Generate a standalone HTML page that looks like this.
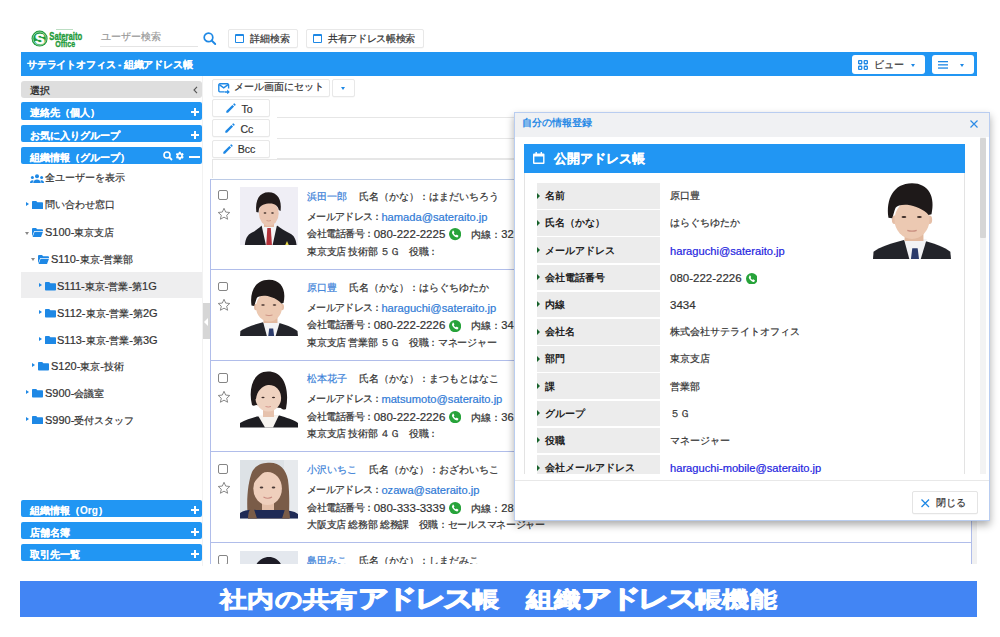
<!DOCTYPE html>
<html><head><meta charset="utf-8">
<style>
*{box-sizing:border-box;margin:0;padding:0}
html,body{width:1000px;height:637px;overflow:hidden;background:#fff}
body{position:relative;font-family:"Liberation Sans",sans-serif;font-size:10px;color:#333;-webkit-text-stroke:0.2px currentColor}
.a{position:absolute;white-space:nowrap}
.bar{position:absolute;left:21px;width:181px;height:17.6px;background:#2196f3;border-radius:2px;color:#fff;font-weight:bold}
.bar .t{position:absolute;left:9px;top:5px;line-height:12px;-webkit-text-stroke:0.1px #fff}
.plus{position:absolute;right:3.5px;top:6px;width:8px;height:8px}
.plus:before{content:"";position:absolute;left:0;top:3px;width:8px;height:2px;background:#fff}
.plus:after{content:"";position:absolute;left:3px;top:0;width:2px;height:8px;background:#fff}
.btn{position:absolute;background:#fff;border:1px solid #e8e8e8;border-radius:2px;box-shadow:0 0.5px 0.5px rgba(0,0,0,0.05)}
.tree{position:absolute;height:12px;line-height:12px;white-space:nowrap;color:#333}
.lab{position:absolute;left:537px;width:123px;height:25.6px;background:#ececec;font-weight:bold;color:#222}
.lab .tri{position:absolute;left:0;top:9.6px;width:0;height:0;border-left:3.6px solid #17612a;border-top:3.6px solid transparent;border-bottom:3.6px solid transparent}
.lab .t{position:absolute;left:8px;top:7.3px;line-height:12px;-webkit-text-stroke:0}
.val{position:absolute;left:670px;line-height:12px;white-space:nowrap;color:#333}
.lat{font-size:11.5px}
.l{font-size:11px}
.lat11{font-size:11.15px}
.ln{line-height:12px;color:#333;font-size:9.7px}
.nm{color:#3a7fd8}
.lk{color:#2f7ad6}
.cb{width:9.7px;height:9.7px;border:1.2px solid #858585;border-radius:2px}
.ln.lat11,.ln .lat11{font-size:11.15px}
.ln .lat115{font-size:11.5px}
.mlk{color:#2424e0;font-size:11.15px}
.mlat{font-size:11.5px}
.kk{font-size:31px;letter-spacing:-3px;-webkit-text-stroke:1.5px #fff}
.ph{display:inline-block;vertical-align:-2.5px;margin-left:3.8px}
</style></head><body>

<!-- logo -->
<svg class="a" style="left:30px;top:27px" width="56" height="22" viewBox="0 0 56 22">
  <circle cx="9.6" cy="11.6" r="8" fill="#1f9b3b"/>
  <circle cx="9.6" cy="11.6" r="6.6" fill="none" stroke="#fff" stroke-width="0.6" opacity="0.8"/>
  <text x="9.8" y="16.6" text-anchor="middle" font-family="Liberation Sans" font-weight="bold" font-size="14.5" fill="#fff" stroke="#fff" stroke-width="0.6">S</text>
  <text x="19.3" y="13.2" font-family="Liberation Sans" font-weight="bold" font-size="10" fill="#1f9b3b" stroke="#1f9b3b" stroke-width="0.35" textLength="33" lengthAdjust="spacingAndGlyphs">Sateraito</text>
  <text x="25.2" y="20.4" font-family="Liberation Sans" font-weight="bold" font-size="9.5" fill="#1f9b3b" stroke="#1f9b3b" stroke-width="0.35" textLength="20" lengthAdjust="spacingAndGlyphs">Office</text>
  <rect x="26" y="2.2" width="17" height="0.7" fill="#9fd0a9"/>
</svg>
<!-- user search -->
<div class="a" style="left:101px;top:31px;line-height:12px;color:#999">ユーザー検索</div>
<div class="a" style="left:100px;top:46px;width:98px;height:1px;background:#e4e4e4"></div>
<svg class="a" style="left:202px;top:31px" width="16" height="15" viewBox="0 0 16 15"><circle cx="6.5" cy="6.4" r="4.3" fill="none" stroke="#1e88e5" stroke-width="1.7"/><line x1="9.6" y1="9.5" x2="13.2" y2="13" stroke="#1e88e5" stroke-width="1.9" stroke-linecap="round"/></svg>

<div class="btn" style="left:228px;top:29px;width:70px;height:19px">
  <div class="a" style="left:6px;top:4px;width:9px;height:9px;border:1.6px solid #1e88e5;border-top-width:2.6px;border-radius:1px"></div>
  <div class="a" style="left:21px;top:3px;line-height:12px;color:#333">詳細検索</div>
</div>
<div class="btn" style="left:306px;top:29px;width:118px;height:19px">
  <div class="a" style="left:6px;top:4px;width:9px;height:9px;border:1.6px solid #1e88e5;border-top-width:2.6px;border-radius:1px"></div>
  <div class="a" style="left:21px;top:3px;line-height:12px;color:#333;letter-spacing:-0.35px">共有アドレス帳検索</div>
</div>

<!-- header bar -->
<div class="a" style="left:21px;top:52px;width:956px;height:24px;background:#2196f3"></div>
<div class="a" style="left:27px;top:58.5px;line-height:12px;color:#fff;font-weight:bold;-webkit-text-stroke:0.1px #fff;letter-spacing:-0.18px">サテライトオフィス - 組織アドレス帳</div>
<div class="a" style="left:852px;top:55px;width:73px;height:19px;background:#fff;border-radius:3px">
  <svg class="a" style="left:6px;top:5px" width="10" height="10" viewBox="0 0 10 10"><g fill="none" stroke="#1e88e5" stroke-width="1.3"><rect x="0.65" y="0.65" width="3.1" height="3.1" rx="0.5"/><rect x="6.25" y="0.65" width="3.1" height="3.1" rx="0.5"/><rect x="0.65" y="6.25" width="3.1" height="3.1" rx="0.5"/><rect x="6.25" y="6.25" width="3.1" height="3.1" rx="0.5"/></g></svg>
  <div class="a" style="left:21.5px;top:3.5px;line-height:12px;color:#333">ビュー</div>
  <div class="a" style="left:59px;top:8.5px;border-top:3px solid #1e88e5;border-left:2.5px solid transparent;border-right:2.5px solid transparent"></div>
</div>
<div class="a" style="left:931.5px;top:55px;width:42.5px;height:19px;background:#fff;border-radius:3px">
  <svg class="a" style="left:6.5px;top:6px" width="10" height="8" viewBox="0 0 10 8"><g fill="#1e88e5"><rect x="0" y="0" width="10" height="1.3"/><rect x="0" y="3.2" width="10" height="1.3"/><rect x="0" y="6.4" width="10" height="1.3"/></g></svg>
  <div class="a" style="left:28.5px;top:8.5px;border-top:3px solid #1e88e5;border-left:2.5px solid transparent;border-right:2.5px solid transparent"></div>
</div>

<!-- LEFT PANEL -->
<div class="a" style="left:21px;top:81px;width:181px;height:16.6px;background:#dedede;border-radius:3px">
  <div class="a" style="left:9px;top:3.5px;line-height:12px;color:#333;font-weight:bold;-webkit-text-stroke:0">選択</div>
  <svg class="a" style="left:172px;top:5px" width="5" height="8" viewBox="0 0 5 8"><path d="M4 .8L1 4l3 3.2" fill="none" stroke="#555" stroke-width="1.1"/></svg>
</div>
<div class="bar" style="top:102.4px"><span class="t">連絡先（個人）</span><span class="plus"></span></div>
<div class="bar" style="top:124.6px"><span class="t">お気に入りグループ</span><span class="plus"></span></div>
<div class="bar" style="top:146.6px"><span class="t">組織情報（グループ）</span>
  <svg class="a" style="left:142px;top:4.5px" width="10" height="10" viewBox="0 0 10 10"><circle cx="4" cy="4" r="3" fill="none" stroke="#fff" stroke-width="1.6"/><line x1="6.2" y1="6.2" x2="9" y2="9" stroke="#fff" stroke-width="1.8"/></svg>
  <svg class="a" style="left:153.6px;top:4.1px" width="9.6" height="9.6" viewBox="0 0 24 24"><path fill="#fff" d="M19.4 13c.04-.3.06-.65.06-1s-.02-.7-.07-1l2.1-1.65a.5.5 0 0 0 .12-.64l-2-3.46a.5.5 0 0 0-.6-.22l-2.5 1a7.3 7.3 0 0 0-1.7-1l-.38-2.65A.5.5 0 0 0 14 2h-4a.5.5 0 0 0-.5.42l-.37 2.65c-.6.25-1.17.6-1.7 1l-2.5-1a.5.5 0 0 0-.6.22l-2 3.46a.5.5 0 0 0 .12.64L4.57 11c-.04.3-.07.65-.07 1s.02.7.07 1l-2.1 1.65a.5.5 0 0 0-.12.64l2 3.46c.12.22.38.3.6.22l2.5-1c.52.4 1.08.74 1.7 1l.37 2.65c.04.24.25.42.5.42h4c.25 0 .46-.18.5-.42l.37-2.65c.6-.26 1.17-.6 1.7-1l2.5 1c.22.08.48 0 .6-.22l2-3.46a.5.5 0 0 0-.12-.64zM12 15.5A3.5 3.5 0 1 1 12 8.5a3.5 3.5 0 0 1 0 7z"/></svg>
  <div class="a" style="left:168px;top:9.2px;width:11px;height:2.2px;background:#fff"></div>
</div>

<svg class="a" style="left:30px;top:174px" width="14" height="9" viewBox="0 0 14 9"><g fill="#1e88e5"><circle cx="7" cy="2.3" r="2"/><path d="M3.2 9c0-2.2 1.7-3.6 3.8-3.6S10.8 6.8 10.8 9z"/><circle cx="2.4" cy="3.6" r="1.5"/><path d="M0 9c0-1.7 1-2.7 2.4-2.7.6 0 1 .2 1.3.4C3 7.4 2.6 8.1 2.6 9z"/><circle cx="11.6" cy="3.6" r="1.5"/><path d="M14 9c0-1.7-1-2.7-2.4-2.7-.6 0-1 .2-1.3.4.7.7 1.1 1.4 1.1 2.3z"/></g></svg>
<div class="tree" style="left:45px;top:172.3px">全ユーザーを表示</div>

<!-- tree rows inserted here -->
<div class="a" style="left:21px;top:272px;width:181px;height:26px;background:#eeeeef"></div>
<div class="a" style="left:25.9px;top:202.0px;border-left:3px solid #1e88e5;border-top:2.5px solid transparent;border-bottom:2.5px solid transparent"></div>
<svg class="a" style="left:32.0px;top:200.9px" width="11" height="8.6" viewBox="0 0 11 8.6"><path fill="#1e88e5" d="M0 .8A.8.8 0 0 1 .8 0h3.4l1.2 1.3h4.8a.8.8 0 0 1 .8.8v5.7a.8.8 0 0 1-.8.8H.8A.8.8 0 0 1 0 7.8z"/></svg>
<div class="tree" style="left:45px;top:198.8px">問い合わせ窓口</div>
<div class="a" style="left:24.6px;top:231.5px;border-top:3px solid #888;border-left:2.5px solid transparent;border-right:2.5px solid transparent"></div>
<svg class="a" style="left:32.0px;top:228.2px" width="11" height="9" viewBox="0 0 11 9"><path fill="#1e88e5" d="M0 1a1 1 0 0 1 1-1h3l1.2 1.2H10a1 1 0 0 1 1 1V3H2.3L0 8.5z"/><path fill="#1e88e5" d="M2.6 3.8H11L9 9H0.6z"/></svg>
<div class="tree" style="left:45px;top:226.3px"><span class=l>S100-</span>東京支店</div>
<div class="a" style="left:31px;top:258.1px;border-top:3px solid #888;border-left:2.5px solid transparent;border-right:2.5px solid transparent"></div>
<svg class="a" style="left:38.1px;top:254.8px" width="11" height="9" viewBox="0 0 11 9"><path fill="#1e88e5" d="M0 1a1 1 0 0 1 1-1h3l1.2 1.2H10a1 1 0 0 1 1 1V3H2.3L0 8.5z"/><path fill="#1e88e5" d="M2.6 3.8H11L9 9H0.6z"/></svg>
<div class="tree" style="left:51px;top:252.9px"><span class=l>S110-</span>東京<span class=l>-</span>営業部</div>
<div class="a" style="left:38.5px;top:283.1px;border-left:3px solid #1e88e5;border-top:2.5px solid transparent;border-bottom:2.5px solid transparent"></div>
<svg class="a" style="left:44.5px;top:282.0px" width="11" height="8.6" viewBox="0 0 11 8.6"><path fill="#1e88e5" d="M0 .8A.8.8 0 0 1 .8 0h3.4l1.2 1.3h4.8a.8.8 0 0 1 .8.8v5.7a.8.8 0 0 1-.8.8H.8A.8.8 0 0 1 0 7.8z"/></svg>
<div class="tree" style="left:57px;top:279.9px"><span class=l>S111-</span>東京<span class=l>-</span>営業<span class=l>-</span>第<span class=l>1G</span></div>
<div class="a" style="left:38.5px;top:310.1px;border-left:3px solid #1e88e5;border-top:2.5px solid transparent;border-bottom:2.5px solid transparent"></div>
<svg class="a" style="left:44.5px;top:309.0px" width="11" height="8.6" viewBox="0 0 11 8.6"><path fill="#1e88e5" d="M0 .8A.8.8 0 0 1 .8 0h3.4l1.2 1.3h4.8a.8.8 0 0 1 .8.8v5.7a.8.8 0 0 1-.8.8H.8A.8.8 0 0 1 0 7.8z"/></svg>
<div class="tree" style="left:57px;top:306.9px"><span class=l>S112-</span>東京<span class=l>-</span>営業<span class=l>-</span>第<span class=l>2G</span></div>
<div class="a" style="left:38.5px;top:336.7px;border-left:3px solid #1e88e5;border-top:2.5px solid transparent;border-bottom:2.5px solid transparent"></div>
<svg class="a" style="left:44.5px;top:335.6px" width="11" height="8.6" viewBox="0 0 11 8.6"><path fill="#1e88e5" d="M0 .8A.8.8 0 0 1 .8 0h3.4l1.2 1.3h4.8a.8.8 0 0 1 .8.8v5.7a.8.8 0 0 1-.8.8H.8A.8.8 0 0 1 0 7.8z"/></svg>
<div class="tree" style="left:57px;top:333.5px"><span class=l>S113-</span>東京<span class=l>-</span>営業<span class=l>-</span>第<span class=l>3G</span></div>
<div class="a" style="left:32.3px;top:363.2px;border-left:3px solid #1e88e5;border-top:2.5px solid transparent;border-bottom:2.5px solid transparent"></div>
<svg class="a" style="left:38.1px;top:362.1px" width="11" height="8.6" viewBox="0 0 11 8.6"><path fill="#1e88e5" d="M0 .8A.8.8 0 0 1 .8 0h3.4l1.2 1.3h4.8a.8.8 0 0 1 .8.8v5.7a.8.8 0 0 1-.8.8H.8A.8.8 0 0 1 0 7.8z"/></svg>
<div class="tree" style="left:51px;top:360.0px"><span class=l>S120-</span>東京<span class=l>-</span>技術</div>
<div class="a" style="left:26.0px;top:390.4px;border-left:3px solid #1e88e5;border-top:2.5px solid transparent;border-bottom:2.5px solid transparent"></div>
<svg class="a" style="left:32.0px;top:389.3px" width="11" height="8.6" viewBox="0 0 11 8.6"><path fill="#1e88e5" d="M0 .8A.8.8 0 0 1 .8 0h3.4l1.2 1.3h4.8a.8.8 0 0 1 .8.8v5.7a.8.8 0 0 1-.8.8H.8A.8.8 0 0 1 0 7.8z"/></svg>
<div class="tree" style="left:45px;top:387.2px"><span class=l>S900-</span>会議室</div>
<div class="a" style="left:26.0px;top:416.9px;border-left:3px solid #1e88e5;border-top:2.5px solid transparent;border-bottom:2.5px solid transparent"></div>
<svg class="a" style="left:32.0px;top:415.8px" width="11" height="8.6" viewBox="0 0 11 8.6"><path fill="#1e88e5" d="M0 .8A.8.8 0 0 1 .8 0h3.4l1.2 1.3h4.8a.8.8 0 0 1 .8.8v5.7a.8.8 0 0 1-.8.8H.8A.8.8 0 0 1 0 7.8z"/></svg>
<div class="tree" style="left:45px;top:413.7px"><span class=l>S990-</span>受付スタッフ</div>

<div class="bar" style="top:499.7px"><span class="t">組織情報（Org）</span><span class="plus"></span></div>
<div class="bar" style="top:521.9px"><span class="t">店舗名簿</span><span class="plus"></span></div>
<div class="bar" style="top:543.5px"><span class="t">取引先一覧</span><span class="plus"></span></div>

<!-- MAIN -->
<div class="btn" style="left:212px;top:78.5px;width:118px;height:18px">
  <svg class="a" style="left:5px;top:3.5px" width="12.5" height="11" viewBox="0 0 12.5 11"><g fill="none" stroke="#1e88e5" stroke-width="1.4"><path d="M6.6 8.9H1.9a1.1 1.1 0 0 1-1.1-1.1V1.9A1.1 1.1 0 0 1 1.9.8h7.6a1.1 1.1 0 0 1 1.1 1.1V5.6"/><path d="M1.3 1.6L5.7 4.9 10.1 1.6"/></g><path fill="#1e88e5" d="M6.8 8.2h2.4V6.6l2.6 2.4-2.6 2.4V9.8H6.8z"/></svg>
  <div class="a" style="left:20.8px;top:1.8px;line-height:12px;color:#333">メール画面にセット</div>
</div>
<div class="btn" style="left:331.5px;top:78.5px;width:23.5px;height:18px">
  <div class="a" style="left:8.5px;top:7px;border-top:3px solid #1e88e5;border-left:2.5px solid transparent;border-right:2.5px solid transparent"></div>
</div>
<div class="btn" style="left:211.7px;top:98.8px;width:58px;height:18px"><svg class="a" style="left:13.6px;top:3px" width="10" height="10" viewBox="0 0 10 10"><path fill="#1e88e5" d="M.3 9.7V8L6.4 1.9 8.1 3.6 2 9.7zM7.1 1.2L7.9.4a.5.5 0 0 1 .7 0l1 1a.5.5 0 0 1 0 .7L8.8 2.9z"/></svg><div class="a" style="left:28.9px;top:2.8px;line-height:12px;font-size:10.6px;color:#333">To</div></div>
<div class="btn" style="left:211.7px;top:119.3px;width:58px;height:18px"><svg class="a" style="left:12.6px;top:3px" width="10" height="10" viewBox="0 0 10 10"><path fill="#1e88e5" d="M.3 9.7V8L6.4 1.9 8.1 3.6 2 9.7zM7.1 1.2L7.9.4a.5.5 0 0 1 .7 0l1 1a.5.5 0 0 1 0 .7L8.8 2.9z"/></svg><div class="a" style="left:27.7px;top:2.8px;line-height:12px;font-size:10.6px;color:#333">Cc</div></div>
<div class="btn" style="left:211.7px;top:139.6px;width:58px;height:18px"><svg class="a" style="left:10.1px;top:3px" width="10" height="10" viewBox="0 0 10 10"><path fill="#1e88e5" d="M.3 9.7V8L6.4 1.9 8.1 3.6 2 9.7zM7.1 1.2L7.9.4a.5.5 0 0 1 .7 0l1 1a.5.5 0 0 1 0 .7L8.8 2.9z"/></svg><div class="a" style="left:25.0px;top:2.8px;line-height:12px;font-size:10.6px;color:#333">Bcc</div></div>
<div class="a" style="left:277px;top:117px;width:700px;height:1px;background:#e6e6e6"></div>
<div class="a" style="left:277px;top:138px;width:700px;height:1px;background:#e6e6e6"></div>
<div class="a" style="left:277px;top:158px;width:700px;height:1px;background:#e6e6e6"></div>
<div class="a" style="left:212px;top:158.5px;width:765px;height:19px;border:1px solid #e6e6e6;border-right:none;border-bottom:none"></div>
<!--LIST_START-->
<div class="a" style="left:210px;top:179px;width:762px;height:385px;overflow:hidden">
<div class="a" style="left:0;top:0;width:762px;height:1px;background:#bccbe6"></div>
<div class="a" style="left:0;top:0;width:1px;height:385px;background:#b0bdea"></div>
<div class="a" style="left:761px;top:0;width:1px;height:385px;background:#b0bdea"></div>
<div class="a cb" style="left:8.3px;top:11.10px"></div>
<svg class="a" style="left:6.5px;top:28.20px" width="14" height="14" viewBox="0 0 24 24"><path fill="none" stroke="#808080" stroke-width="1.6" stroke-linejoin="round" d="M12 2.2l2.9 6.5 7 .7-5.3 4.7 1.6 6.9L12 17.4 5.8 21l1.6-6.9L2.1 9.4l7-.7z"/></svg>
<div class="a" style="left:30.2px;top:7.70px;width:58px;height:58.5px"><svg width="100%" height="100%" viewBox="0 0 58 58.5" preserveAspectRatio="none" style="display:block">
<rect width="58" height="58.5" fill="#efeef5"/>
<path fill="#1f1f25" d="M4.8 58.5 C5.5 52 7 48 12 45.5 C16 43.5 19 41 21.4 38.8 L37.5 38.8 C40 41 45 44 50 46.5 C54 48.5 56 52 56.6 58.5Z"/>
<path fill="#f4f4f6" d="M21.5 38 L37 38 L32.5 58.5 L26 58.5Z"/>
<path fill="#b3323a" d="M27.3 41 L30.8 41 L32 58.5 L26.2 58.5Z"/>
<rect x="24" y="32" width="10" height="8" fill="#e3b9a2"/>
<ellipse cx="28.8" cy="26.5" rx="9.9" ry="12.3" fill="#eac6b2"/>
<path fill="#211a1a" d="M16.3 25 C15 13 19.5 5.3 28.5 5.3 C37.5 5.3 42 12.5 40.6 24 L38.8 23 C38 19 35 16.5 30 16.5 C25 16.5 20.5 18 19 22 L18.5 25.5Z"/>
<path fill="#e7d84a" d="M45 58.5 L47 54 L49 58.5Z"/>
<g fill="#3a2a26"><ellipse cx="25" cy="26" rx="1.4" ry="0.7"/><ellipse cx="32.5" cy="26" rx="1.4" ry="0.7"/></g><path d="M26.5 33.5 Q28.8 34.5 31 33.5" stroke="#c98f80" stroke-width="0.8" fill="none"/>
</svg></div>
<div class="a ln" style="left:97.2px;top:11.50px"><span class="nm">浜田一郎</span><span style="margin-left:12px">氏名（かな）：はまだいちろう</span></div>
<div class="a ln" style="left:97.2px;top:31.60px;letter-spacing:-0.7px">メールアドレス：</div><div class="a ln lk lat11" style="left:171.4px;top:31.60px">hamada@sateraito.jp</div>
<div class="a ln" style="left:97.2px;top:49.10px;letter-spacing:-0.5px">会社電話番号：</div><div class="a ln" style="left:163.7px;top:49.10px"><span class="lat115">080-222-2225</span><svg class="ph" width="12.2" height="12.2" viewBox="0 0 12 12"><circle cx="6" cy="6" r="6" fill="#27a33a"/><path fill="#fff" d="M3.6 2.6c.3-.2.6-.2.8.1l.8 1.2c.2.3.1.6-.1.8l-.4.4c.3.8 1 1.6 1.9 2.1l.4-.4c.2-.2.5-.3.8-.1l1.2.8c.3.2.3.5.1.8l-.6.7c-.3.3-.8.4-1.2.2C5.4 8.4 3.8 6.9 3 5.1c-.2-.4-.1-.9.2-1.2z"/></svg><span style="margin-left:10px">内線：<span class="lat11">3232</span></span></div>
<div class="a ln" style="left:97.2px;top:66.70px;letter-spacing:-0.3px">東京支店 技術部 ５Ｇ　役職：</div>
<div class="a" style="left:0;top:89.60px;width:762px;height:1px;background:#b0bdea"></div>
<div class="a cb" style="left:8.3px;top:102.70px"></div>
<svg class="a" style="left:6.5px;top:119.30px" width="14" height="14" viewBox="0 0 24 24"><path fill="none" stroke="#808080" stroke-width="1.6" stroke-linejoin="round" d="M12 2.2l2.9 6.5 7 .7-5.3 4.7 1.6 6.9L12 17.4 5.8 21l1.6-6.9L2.1 9.4l7-.7z"/></svg>
<div class="a" style="left:30.2px;top:98.80px;width:58px;height:58.5px"><svg width="100%" height="100%" viewBox="0 0 58 58.5" preserveAspectRatio="none" style="display:block">
<rect width="58" height="58.5" fill="#ffffff"/>
<path fill="#23242a" d="M0 58.5 L0.4 53 C5 49.5 14 46.5 23 44.3 L36 44.3 C45 46.5 53 49.5 57.5 53 L58 58.5Z"/>
<path fill="#f3f3f5" d="M23 43.5 L40 43.5 L35.5 58.5 L27 58.5Z"/>
<path fill="#2b3b6b" d="M29.2 50.5 L33.2 50.5 L34.2 58.5 L28.2 58.5Z"/>
<rect x="23.5" y="36" width="14" height="9" fill="#e2b99f"/>
<ellipse cx="16" cy="29" rx="2" ry="3.2" fill="#e5bea6"/>
<ellipse cx="42" cy="29" rx="2" ry="3.2" fill="#e5bea6"/>
<ellipse cx="29" cy="29" rx="13" ry="14.5" fill="#ecc9b2"/>
<path fill="#1e1919" d="M11.5 27.5 C9.5 14 15 1.7 29 1.7 C41.5 1.7 46.5 12 43.5 25 L41.3 25.5 C38.5 21.5 31 18.5 25.5 17.8 C21 17.5 18 18.5 16.8 20 C15.8 22.5 15.2 25.5 14.2 28Z"/>
<g fill="#3a2a26"><ellipse cx="23" cy="27" rx="1.8" ry="0.8"/><ellipse cx="34.5" cy="27" rx="1.8" ry="0.8"/></g><path d="M25.5 37 Q29 38.3 32.5 37" stroke="#c98f80" stroke-width="0.9" fill="none"/>
</svg></div>
<div class="a ln" style="left:97.2px;top:102.60px"><span class="nm">原口豊</span><span style="margin-left:12px">氏名（かな）：はらぐちゆたか</span></div>
<div class="a ln" style="left:97.2px;top:122.70px;letter-spacing:-0.7px">メールアドレス：</div><div class="a ln lk lat11" style="left:171.4px;top:122.70px">haraguchi@sateraito.jp</div>
<div class="a ln" style="left:97.2px;top:140.20px;letter-spacing:-0.5px">会社電話番号：</div><div class="a ln" style="left:163.7px;top:140.20px"><span class="lat115">080-222-2226</span><svg class="ph" width="12.2" height="12.2" viewBox="0 0 12 12"><circle cx="6" cy="6" r="6" fill="#27a33a"/><path fill="#fff" d="M3.6 2.6c.3-.2.6-.2.8.1l.8 1.2c.2.3.1.6-.1.8l-.4.4c.3.8 1 1.6 1.9 2.1l.4-.4c.2-.2.5-.3.8-.1l1.2.8c.3.2.3.5.1.8l-.6.7c-.3.3-.8.4-1.2.2C5.4 8.4 3.8 6.9 3 5.1c-.2-.4-.1-.9.2-1.2z"/></svg><span style="margin-left:10px">内線：<span class="lat11">3434</span></span></div>
<div class="a ln" style="left:97.2px;top:157.80px;letter-spacing:-0.3px">東京支店 営業部 ５Ｇ　役職：マネージャー</div>
<div class="a" style="left:0;top:180.95px;width:762px;height:1px;background:#b0bdea"></div>
<div class="a cb" style="left:8.3px;top:194.05px"></div>
<svg class="a" style="left:6.5px;top:210.65px" width="14" height="14" viewBox="0 0 24 24"><path fill="none" stroke="#808080" stroke-width="1.6" stroke-linejoin="round" d="M12 2.2l2.9 6.5 7 .7-5.3 4.7 1.6 6.9L12 17.4 5.8 21l1.6-6.9L2.1 9.4l7-.7z"/></svg>
<div class="a" style="left:30.2px;top:190.15px;width:58px;height:58.5px"><svg width="100%" height="100%" viewBox="0 0 58 58.5" preserveAspectRatio="none" style="display:block">
<rect width="58" height="58.5" fill="#fff"/>
<path fill="#1d1d22" d="M0 58.5 L0 54 C5 51 12 49 16.7 47.6 L39.5 46.6 C46 48.5 54 51 58 54 L58 58.5Z"/>
<path fill="#f7f4f0" d="M18 46.5 L39 46 L33 58.5 L25 58.5Z"/>
<rect x="23" y="38" width="11" height="10" fill="#e6c2ad"/>
<path fill="#201a1b" d="M12 36 C8 20 13 2.6 28 2.6 C43 2.6 50 18 46 40 C44 41 42 40.5 41 39 L16 36 C14 37 13 37 12 36Z"/>
<ellipse cx="28.3" cy="29" rx="12.8" ry="13.5" fill="#efd2c0"/>
<path fill="#201a1b" d="M14.5 30 C14 16 22 9 33 9.5 C40 10 44 16 43.5 24 C40 19 34 15.5 28 16 C22 17 17 22 16 30Z"/>
<g fill="#3a2a26"><ellipse cx="23" cy="28.5" rx="1.6" ry="0.8"/><ellipse cx="33.5" cy="28.5" rx="1.6" ry="0.8"/></g><path d="M25.5 37.5 Q28.3 38.6 31 37.5" stroke="#d08f86" stroke-width="0.9" fill="none"/>
</svg></div>
<div class="a ln" style="left:97.2px;top:193.95px"><span class="nm">松本花子</span><span style="margin-left:12px">氏名（かな）：まつもとはなこ</span></div>
<div class="a ln" style="left:97.2px;top:214.05px;letter-spacing:-0.7px">メールアドレス：</div><div class="a ln lk lat11" style="left:171.4px;top:214.05px">matsumoto@sateraito.jp</div>
<div class="a ln" style="left:97.2px;top:231.55px;letter-spacing:-0.5px">会社電話番号：</div><div class="a ln" style="left:163.7px;top:231.55px"><span class="lat115">080-222-2226</span><svg class="ph" width="12.2" height="12.2" viewBox="0 0 12 12"><circle cx="6" cy="6" r="6" fill="#27a33a"/><path fill="#fff" d="M3.6 2.6c.3-.2.6-.2.8.1l.8 1.2c.2.3.1.6-.1.8l-.4.4c.3.8 1 1.6 1.9 2.1l.4-.4c.2-.2.5-.3.8-.1l1.2.8c.3.2.3.5.1.8l-.6.7c-.3.3-.8.4-1.2.2C5.4 8.4 3.8 6.9 3 5.1c-.2-.4-.1-.9.2-1.2z"/></svg><span style="margin-left:10px">内線：<span class="lat11">3636</span></span></div>
<div class="a ln" style="left:97.2px;top:249.15px;letter-spacing:-0.3px">東京支店 技術部 ４Ｇ　役職：</div>
<div class="a" style="left:0;top:271.95px;width:762px;height:1px;background:#b0bdea"></div>
<div class="a cb" style="left:8.3px;top:285.05px"></div>
<svg class="a" style="left:6.5px;top:301.65px" width="14" height="14" viewBox="0 0 24 24"><path fill="none" stroke="#808080" stroke-width="1.6" stroke-linejoin="round" d="M12 2.2l2.9 6.5 7 .7-5.3 4.7 1.6 6.9L12 17.4 5.8 21l1.6-6.9L2.1 9.4l7-.7z"/></svg>
<div class="a" style="left:30.2px;top:281.15px;width:58px;height:58.5px"><svg width="100%" height="100%" viewBox="0 0 58 58.5" preserveAspectRatio="none" style="display:block">
<rect width="58" height="58.5" fill="#dde2e6"/>
<rect x="44" y="0" width="14" height="58.5" fill="#e7eaed"/>
<path fill="#7a5c48" d="M8 58.5 C6 40 8 22 12 12 C16 4 24 2.8 30 2.8 C40 2.8 46 10 48 20 C50 35 49 50 49 58.5Z"/>
<path fill="#1f2a55" d="M0 58.5 L0 53 C4 50 10 49.5 16 50 L42 50 C48 50 54 51 58 54 L58 58.5Z"/>
<path fill="#7a5c48" d="M8 58.5 C8 52 10 48 13 46 L17 58.5Z M42 58.5 L46 46 C49 49 50 54 50 58.5Z"/>
<rect x="22" y="38" width="12" height="12" fill="#e4bfa8"/>
<ellipse cx="27.6" cy="28.5" rx="14.3" ry="16.6" fill="#efcfbc"/>
<path fill="#7a5c48" d="M13 24 C13 12 22 7 30 7.5 C25 11 19 16 13 24Z M30 7.5 C38 8 43 14 43 24 C40 17 35 11 30 7.5Z"/>
<g fill="#4a3a36"><ellipse cx="21.5" cy="27.5" rx="1.8" ry="0.9"/><ellipse cx="33.5" cy="27.5" rx="1.8" ry="0.9"/></g><path d="M23.5 37 Q28 39.5 32 37" stroke="#c98a80" stroke-width="1.1" fill="none"/>
</svg></div>
<div class="a ln" style="left:97.2px;top:284.95px"><span class="nm">小沢いちこ</span><span style="margin-left:12px">氏名（かな）：おざわいちこ</span></div>
<div class="a ln" style="left:97.2px;top:305.05px;letter-spacing:-0.7px">メールアドレス：</div><div class="a ln lk lat11" style="left:171.4px;top:305.05px">ozawa@sateraito.jp</div>
<div class="a ln" style="left:97.2px;top:322.55px;letter-spacing:-0.5px">会社電話番号：</div><div class="a ln" style="left:163.7px;top:322.55px"><span class="lat115">080-333-3339</span><svg class="ph" width="12.2" height="12.2" viewBox="0 0 12 12"><circle cx="6" cy="6" r="6" fill="#27a33a"/><path fill="#fff" d="M3.6 2.6c.3-.2.6-.2.8.1l.8 1.2c.2.3.1.6-.1.8l-.4.4c.3.8 1 1.6 1.9 2.1l.4-.4c.2-.2.5-.3.8-.1l1.2.8c.3.2.3.5.1.8l-.6.7c-.3.3-.8.4-1.2.2C5.4 8.4 3.8 6.9 3 5.1c-.2-.4-.1-.9.2-1.2z"/></svg><span style="margin-left:10px">内線：<span class="lat11">2828</span></span></div>
<div class="a ln" style="left:97.2px;top:340.15px;letter-spacing:-0.3px">大阪支店 総務部 総務課　役職：セールスマネージャー</div>
<div class="a" style="left:0;top:363.20px;width:762px;height:1px;background:#b0bdea"></div>
<div class="a cb" style="left:8.3px;top:376.30px"></div>
<svg class="a" style="left:6.5px;top:392.90px" width="14" height="14" viewBox="0 0 24 24"><path fill="none" stroke="#808080" stroke-width="1.6" stroke-linejoin="round" d="M12 2.2l2.9 6.5 7 .7-5.3 4.7 1.6 6.9L12 17.4 5.8 21l1.6-6.9L2.1 9.4l7-.7z"/></svg>
<div class="a" style="left:30.2px;top:372.40px;width:58px;height:58.5px"><svg width="100%" height="100%" viewBox="0 0 58 58.5" preserveAspectRatio="none" style="display:block">
<rect width="58" height="58.5" fill="#e4e8ee"/>
<path fill="#1d1c26" d="M13 30 C12 14 20 6 29 6 C38 6 45 14 44 30Z"/>
<ellipse cx="28.5" cy="24" rx="11" ry="13" fill="#eccab6"/>
<path fill="#1d1c26" d="M16 20 C18 10 26 8 32 9 C38 10 42 15 42 20 C36 13 24 13 16 20Z"/>
</svg></div>
<div class="a ln" style="left:97.2px;top:376.20px"><span class="nm">島田みこ</span><span style="margin-left:12px">氏名（かな）：しまだみこ</span></div>
<div class="a ln" style="left:97.2px;top:396.30px;letter-spacing:-0.7px">メールアドレス：</div><div class="a ln lk lat11" style="left:171.4px;top:396.30px">shimada@sateraito.jp</div>
<div class="a ln" style="left:97.2px;top:413.80px;letter-spacing:-0.5px">会社電話番号：</div><div class="a ln" style="left:163.7px;top:413.80px"><span class="lat115">080-333-3338</span><svg class="ph" width="12.2" height="12.2" viewBox="0 0 12 12"><circle cx="6" cy="6" r="6" fill="#27a33a"/><path fill="#fff" d="M3.6 2.6c.3-.2.6-.2.8.1l.8 1.2c.2.3.1.6-.1.8l-.4.4c.3.8 1 1.6 1.9 2.1l.4-.4c.2-.2.5-.3.8-.1l1.2.8c.3.2.3.5.1.8l-.6.7c-.3.3-.8.4-1.2.2C5.4 8.4 3.8 6.9 3 5.1c-.2-.4-.1-.9.2-1.2z"/></svg><span style="margin-left:10px">内線：<span class="lat11">2929</span></span></div>
<div class="a ln" style="left:97.2px;top:431.40px;letter-spacing:-0.3px">大阪支店 総務部　役職：</div>
</div>
<!--LIST_END-->
<div class="a" style="left:972px;top:179px;width:5px;height:385px;background:#f1f1f1"></div>
<div class="a" style="left:202px;top:76px;width:1px;height:490px;background:#f2f2f2"></div>
<div class="a" style="left:202.5px;top:303.2px;width:7.3px;height:35.4px;background:#d6d6d6"></div>
<div class="a" style="left:204px;top:317.8px;border-right:4.4px solid #fff;border-top:4.2px solid transparent;border-bottom:4.2px solid transparent"></div>

<!-- MODAL -->
<div class="a" style="left:514px;top:112.4px;width:476px;height:409px;background:#fff;border:1px solid #b9cdf0;box-shadow:0 4px 8px rgba(0,0,0,0.33)">
<div class="a" style="left:0;top:0;width:474px;height:23.2px;background:#f0f1f3"></div>
<div class="a" style="left:7.4px;top:3.6px;line-height:12px;color:#2b8be6;font-weight:bold;-webkit-text-stroke:0">自分の情報登録</div>
<svg class="a" style="left:455.0px;top:6.4px" width="8" height="8" viewBox="0 0 8 8"><path d="M.5 .5L7.5 7.5M7.5 .5L.5 7.5" stroke="#2b8be6" stroke-width="1.2"/></svg>
<div class="a" style="left:0;top:23.2px;width:474px;height:337.8px;overflow:hidden">
<div class="a" style="left:9.4px;top:7.8px;width:440.6px;height:400px;border:1px solid #e3e3e3;border-top:none"></div>
<div class="a" style="left:9.4px;top:7.8px;width:440.6px;height:28.6px;background:#2196f3"></div>
<svg class="a" style="left:18.0px;top:15.8px" width="11.5" height="12" viewBox="0 0 11.5 12"><g fill="#fff"><rect x="2.5" y="0" width="1.4" height="2.5"/><rect x="7.6" y="0" width="1.4" height="2.5"/><path d="M1 1.5h9.5a1 1 0 0 1 1 1V11a1 1 0 0 1-1 1H1a1 1 0 0 1-1-1V2.5a1 1 0 0 1 1-1zM1.4 4.4v6.2h8.7V4.4z"/></g></svg>
<div class="a" style="left:38.6px;top:14.9px;line-height:16px;color:#fff;font-size:13px;font-weight:bold;-webkit-text-stroke:0.1px #fff">公開アドレス帳</div>
<div class="lab" style="left:22.0px;top:46.4px"><span class="tri"></span><span class="t">名前</span></div>
<div class="val" style="left:155.0px;top:53.7px">原口豊</div>
<div class="lab" style="left:22.0px;top:73.6px"><span class="tri"></span><span class="t">氏名（かな）</span></div>
<div class="val" style="left:155.0px;top:80.9px">はらぐちゆたか</div>
<div class="lab" style="left:22.0px;top:100.8px"><span class="tri"></span><span class="t">メールアドレス</span></div>
<div class="val mlk" style="left:155.0px;top:108.1px">haraguchi@sateraito.jp</div>
<div class="lab" style="left:22.0px;top:128.0px"><span class="tri"></span><span class="t">会社電話番号</span></div>
<div class="val" style="left:155.0px;top:135.3px"><span class="mlat">080-222-2226</span><svg class="ph" width="11.6" height="11.6" viewBox="0 0 12 12" style="margin-left:4px"><circle cx="6" cy="6" r="6" fill="#27a33a"/><path fill="#fff" d="M3.6 2.6c.3-.2.6-.2.8.1l.8 1.2c.2.3.1.6-.1.8l-.4.4c.3.8 1 1.6 1.9 2.1l.4-.4c.2-.2.5-.3.8-.1l1.2.8c.3.2.3.5.1.8l-.6.7c-.3.3-.8.4-1.2.2C5.4 8.4 3.8 6.9 3 5.1c-.2-.4-.1-.9.2-1.2z"/></svg></div>
<div class="lab" style="left:22.0px;top:155.2px"><span class="tri"></span><span class="t">内線</span></div>
<div class="val mlat" style="left:155.0px;top:162.5px">3434</div>
<div class="lab" style="left:22.0px;top:182.4px"><span class="tri"></span><span class="t">会社名</span></div>
<div class="val" style="left:155.0px;top:189.7px">株式会社サテライトオフィス</div>
<div class="lab" style="left:22.0px;top:209.6px"><span class="tri"></span><span class="t">部門</span></div>
<div class="val" style="left:155.0px;top:216.9px">東京支店</div>
<div class="lab" style="left:22.0px;top:236.8px"><span class="tri"></span><span class="t">課</span></div>
<div class="val" style="left:155.0px;top:244.1px">営業部</div>
<div class="lab" style="left:22.0px;top:264.0px"><span class="tri"></span><span class="t">グループ</span></div>
<div class="val" style="left:155.0px;top:271.3px">５Ｇ</div>
<div class="lab" style="left:22.0px;top:291.2px"><span class="tri"></span><span class="t">役職</span></div>
<div class="val" style="left:155.0px;top:298.5px">マネージャー</div>
<div class="lab" style="left:22.0px;top:318.4px"><span class="tri"></span><span class="t">会社メールアドレス</span></div>
<div class="val mlk" style="left:155.0px;top:325.7px">haraguchi-mobile@sateraito.jp</div>
<div class="a" style="left:357.5px;top:44.4px;width:78px;height:78px"><svg width="100%" height="100%" viewBox="0 0 58 58.5" preserveAspectRatio="none" style="display:block">
<rect width="58" height="58.5" fill="#ffffff"/>
<path fill="#23242a" d="M0 58.5 L0.4 53 C5 49.5 14 46.5 23 44.3 L36 44.3 C45 46.5 53 49.5 57.5 53 L58 58.5Z"/>
<path fill="#f3f3f5" d="M23 43.5 L40 43.5 L35.5 58.5 L27 58.5Z"/>
<path fill="#2b3b6b" d="M29.2 50.5 L33.2 50.5 L34.2 58.5 L28.2 58.5Z"/>
<rect x="23.5" y="36" width="14" height="9" fill="#e2b99f"/>
<ellipse cx="16" cy="29" rx="2" ry="3.2" fill="#e5bea6"/>
<ellipse cx="42" cy="29" rx="2" ry="3.2" fill="#e5bea6"/>
<ellipse cx="29" cy="29" rx="13" ry="14.5" fill="#ecc9b2"/>
<path fill="#1e1919" d="M11.5 27.5 C9.5 14 15 1.7 29 1.7 C41.5 1.7 46.5 12 43.5 25 L41.3 25.5 C38.5 21.5 31 18.5 25.5 17.8 C21 17.5 18 18.5 16.8 20 C15.8 22.5 15.2 25.5 14.2 28Z"/>
<g fill="#3a2a26"><ellipse cx="23" cy="27" rx="1.8" ry="0.8"/><ellipse cx="34.5" cy="27" rx="1.8" ry="0.8"/></g><path d="M25.5 37 Q29 38.3 32.5 37" stroke="#c98f80" stroke-width="0.9" fill="none"/>
</svg></div>
</div>
<div class="a" style="left:465.0px;top:23.6px;width:6px;height:337.4px;background:#f3f3f3"></div>
<div class="a" style="left:465.3px;top:24.2px;width:5.5px;height:100px;background:#d6d6d6;border-radius:1px"></div>
<div class="a" style="left:0;top:366.6px;width:474px;height:1px;background:#e8e8e8"></div>
<div class="btn" style="left:396.5px;top:378.1px;width:66px;height:23px;border-color:#e4e4e4"><svg class="a" style="left:8.5px;top:7px" width="8.5" height="8.5" viewBox="0 0 8.5 8.5"><path d="M.5 .5L8 8M8 .5L.5 8" stroke="#1e88e5" stroke-width="1.3"/></svg><div class="a" style="left:23.5px;top:4.5px;line-height:12px;color:#333">閉じる</div></div>
</div>

<!-- banner -->
<div class="a" style="left:20px;top:581px;width:957px;height:36px;background:#4285f4"></div>
<div class="a" style="left:20px;top:581px;width:957px;height:36px;line-height:36px;text-align:center;color:#fff;font-weight:bold;font-size:28px;-webkit-text-stroke:1px #fff;transform:scale(0.98,0.8);transform-origin:50% 51%">社内の共有<span class="kk">アドレス</span>帳　組織<span class="kk">アドレス</span>帳機能</div>

</body></html>
